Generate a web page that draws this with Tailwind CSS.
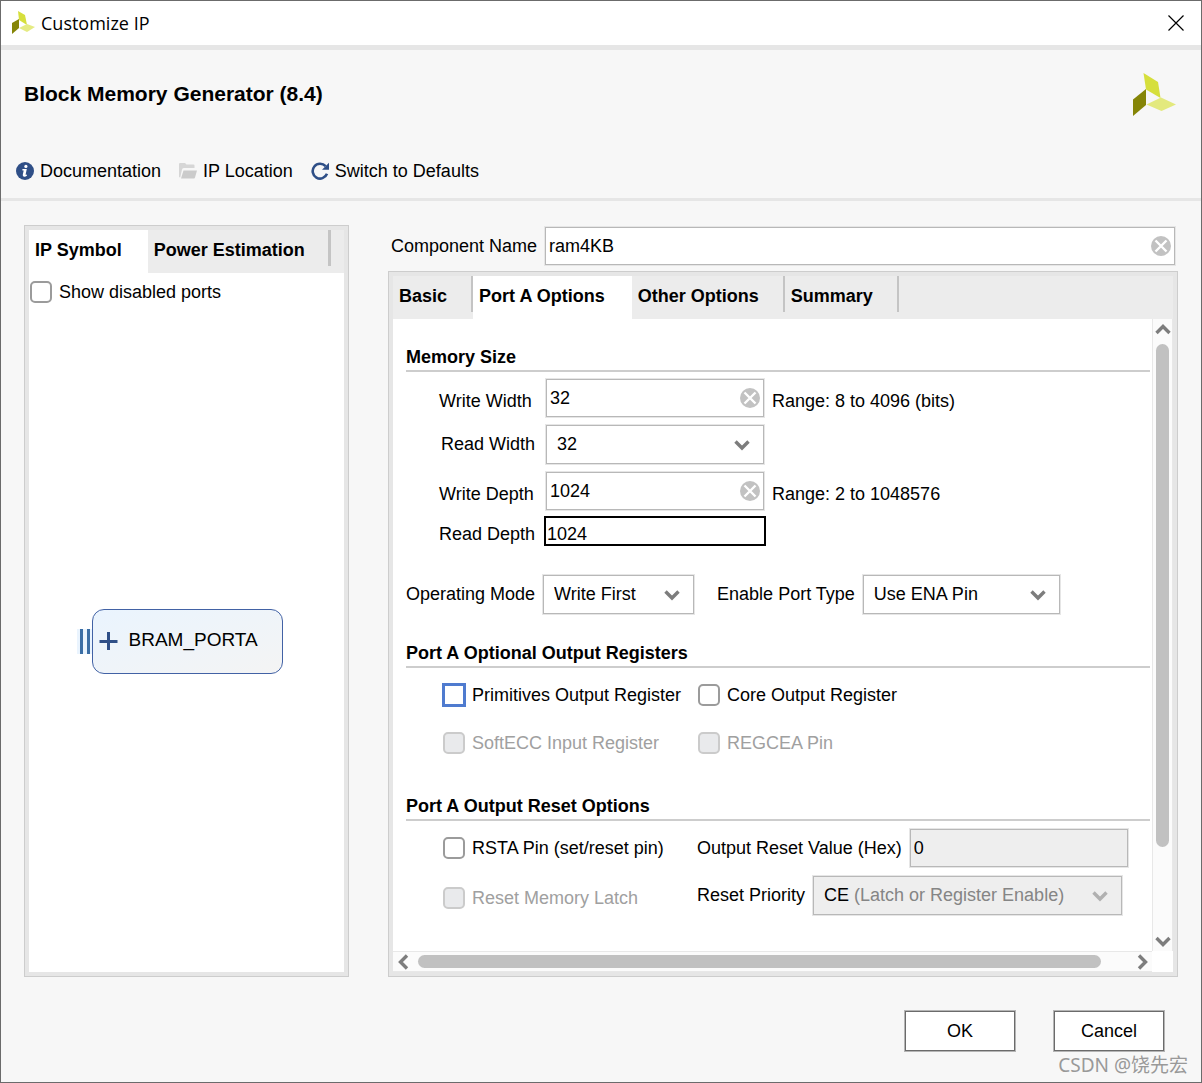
<!DOCTYPE html>
<html lang="en">
<head>
  <meta charset="UTF-8">
  <meta name="viewport" content="width=device-width, initial-scale=1.0">
  <title>Customize IP</title>
  <script src="https://cdn.jsdelivr.net/npm/@tailwindcss/browser@4"></script>
</head>
<body class="min-h-screen flex flex-col border border-[#6b6b6b] bg-[#f7f7f7] text-black text-[18px] leading-6 font-['Liberation_Sans',Arial,sans-serif]">

  <!-- Title bar -->
  <div class="h-[49px] shrink-0 flex items-center justify-between bg-white border-b-5 border-[#e6e6e6] pl-2.5 pr-[17px] pb-px">
    <div class="flex items-center gap-1.5">
      <svg class="w-6 h-6" viewBox="0 0 24 24">
        <path fill="#d6df3c" d="M7 0 L14 4 L16 14 L8 9 Z" />
        <path fill="#858507" d="M1 12 L8 8 V17 L1 23 Z" />
        <path fill="#e5eb83" d="M8 17 L16 13 L24 16 L16 21 Z" />
      </svg>
      <h1 class="text-[18px] font-['Open_Sans','Noto_Sans',sans-serif]">Customize IP</h1>
    </div>
    <button type="button" aria-label="Close">
      <svg class="w-4 h-4" viewBox="0 0 16 16" fill="none" stroke="#000" stroke-width="1.2">
        <path d="M0.5 0.5 L15.5 15.5 M15.5 0.5 L0.5 15.5" />
      </svg>
    </button>
  </div>

  <!-- Header -->
  <header class="shrink-0 border-b-3 border-[#e6e6e6] pb-[15px]">
    <div class="flex items-start justify-between pl-[23px] pr-[25px] pt-[23px]">
      <h2 class="text-[21px] font-bold pt-[9px]">Block Memory Generator (8.4)</h2>
      <svg class="w-[43px] h-[43px]" viewBox="0 0 43 43">
        <path fill="#d6df3c" d="M10.5 0 L25 9 L27.5 25 L13 16.5 Z" />
        <path fill="#858507" d="M0 26.5 L13 16 V32 L0 43 Z" />
        <path fill="#e3e97d" d="M13.5 31.5 L28 24.5 L43 31.5 L28.5 38 Z" />
      </svg>
    </div>
    <nav class="flex gap-[18px] pl-[15px] pt-[43px]">
      <a href="#" class="flex items-center gap-1.5">
        <svg class="w-[18px] h-[18px]" viewBox="0 0 18 18">
          <circle cx="9" cy="9" r="9" fill="#2f4f87" />
          <circle cx="9.9" cy="4.4" r="1.6" fill="#fff" />
          <path d="M6.4 7 H10.8 L9.6 12.4 Q9.5 13.1 10.9 12.6 V13.7 Q9.4 14.9 8 14.7 Q6.4 14.4 6.8 12.6 L7.7 8.4 H6.4 Z" fill="#fff" />
        </svg>
        Documentation
      </a>
      <a href="#" class="flex items-center gap-1.5">
        <svg class="w-[18px] h-[18px]" viewBox="0 0 18 18" fill="#cbcbcb">
          <path d="M0 2 Q0 1 1 1 H6 L7.5 2.5 H14.5 Q15.5 2.5 15.5 3.5 V6 H5 Q3.6 6 3 7.4 L1.2 15.5 Q0 15.5 0 14.5 Z" opacity="0.75" />
          <path d="M4.5 8.5 H18 L16 15.5 Q15.8 16.5 15 16.5 H2 Z" />
        </svg>
        IP Location
      </a>
      <a href="#" class="flex items-center gap-1.5">
        <svg class="w-[18px] h-[18px]" viewBox="0 0 18 18">
          <path d="M14.6 4.2 A7.4 7.4 0 1 0 16 11.8" fill="none" stroke="#2f4f87" stroke-width="2.6" />
          <path d="M18 0.8 V7.8 H11 Z" fill="#2f4f87" />
        </svg>
        Switch to Defaults
      </a>
    </nav>
  </header>

  <main class="flex-1 min-h-0 flex gap-[39px] px-[23px] pt-6">

    <!-- Left panel: symbol preview -->
    <section class="w-[325px] shrink-0 flex flex-col border border-[#cdcdcd] bg-[#e6e6e6] p-1">
      <div class="h-[43px] flex bg-[#ececec] font-bold" role="tablist">
        <button type="button" role="tab" aria-selected="true" class="bg-white pl-1.5 pr-[26px] pb-1 whitespace-nowrap">IP Symbol</button>
        <button type="button" role="tab" class="relative pl-1.5 pr-[26px] pb-1 whitespace-nowrap after:absolute after:right-0 after:top-0 after:h-9 after:w-[3px] after:bg-[#c4c4c4]">Power Estimation</button>
      </div>
      <div class="flex-1 flex flex-col bg-white">
        <label class="flex items-center gap-[7px] pl-px pt-[7px]">
          <input type="checkbox" class="appearance-none w-[22px] h-[22px] rounded-[5px] border-2 border-[#9b9b9b] bg-white">
          Show disabled ports
        </label>
        <div class="flex-1 flex items-center justify-center pr-3.5 pt-1.5">
          <!-- bus pins -->
          <div class="flex gap-1 bg-[#eaf4fe] pl-[3px] pr-0.5">
            <span class="w-[3px] h-[25px] bg-[#3b6ea5]"></span>
            <span class="w-[3px] h-[25px] bg-[#3b6ea5]"></span>
          </div>
          <button type="button" class="w-[191px] h-[65px] flex items-center gap-[11px] rounded-xl border border-[#4262a5] bg-linear-to-br from-[#eaf4fe] to-[#f4f4f4] pl-1.5 pb-0.5 text-[19px]">
            <svg class="w-[19px] h-[19px]" viewBox="0 0 19 19" fill="none" stroke="#2f4f87" stroke-width="3">
              <path d="M9.5 1 V19 M0.5 10.5 H18.5" />
            </svg>
            BRAM_PORTA
          </button>
        </div>
      </div>
    </section>

    <!-- Right panel: options -->
    <section class="flex-1 min-w-0 flex flex-col">
      <div class="flex items-center gap-2 pl-[3px] pr-[3px] pt-0.5 pb-1.5">
        <label for="component-name">Component Name</label>
        <div class="relative flex-1">
          <input id="component-name" type="text" value="ram4KB" class="block w-full h-[38px] border border-[#b8b8b8] ring-1 ring-[#e6e6e6] bg-white pl-[3px] pr-8">
          <button type="button" aria-label="Clear" class="absolute right-1 top-[9px]">
            <svg class="w-5 h-5" viewBox="0 0 20 20">
              <circle cx="10" cy="10" r="10" fill="#c2c2c2" />
              <path d="M4.5 4.5 L15.5 15.5 M15.5 4.5 L4.5 15.5" stroke="#fff" stroke-width="2.4" />
            </svg>
          </button>
        </div>
      </div>

      <div class="flex-1 min-h-0 flex flex-col border border-[#cdcdcd] bg-[#e6e6e6] p-1">
        <div class="h-[43px] shrink-0 flex bg-[#ececec] font-bold" role="tablist">
          <button type="button" role="tab" class="relative pl-1.5 pr-[26px] pb-1 whitespace-nowrap after:absolute after:right-0 after:top-0 after:h-9 after:w-0.5 after:bg-[#c4c4c4]">Basic</button>
          <button type="button" role="tab" aria-selected="true" class="bg-white pl-1.5 pr-[27px] pb-1 whitespace-nowrap">Port A Options</button>
          <button type="button" role="tab" class="relative pl-1.5 pr-[26px] pb-1 whitespace-nowrap after:absolute after:right-0 after:top-0 after:h-9 after:w-0.5 after:bg-[#c4c4c4]">Other Options</button>
          <button type="button" role="tab" class="relative pl-1.5 pr-[26px] pb-1 whitespace-nowrap after:absolute after:right-0 after:top-0 after:h-9 after:w-0.5 after:bg-[#c4c4c4]">Summary</button>
        </div>

        <div class="flex-1 min-h-0 flex">
          <form class="flex-1 min-w-0 bg-white pl-[13px] pr-0.5 pt-[26px]">

            <!-- Memory Size -->
            <h3 class="font-bold pb-px border-b-2 border-[#cdcdcd]">Memory Size</h3>
            <div class="grid grid-cols-[105px_222px_1fr] gap-y-2 items-center pl-[33px] pt-[7px]">
              <label for="write-width" class="pt-1.5">Write Width</label>
              <div class="relative mx-0.5">
                <input id="write-width" type="text" value="32" class="block w-full h-[38px] border border-[#b8b8b8] ring-1 ring-[#e6e6e6] bg-white pl-[3px] pr-8">
                <button type="button" aria-label="Clear" class="absolute right-1 top-[9px]">
                  <svg class="w-5 h-5" viewBox="0 0 20 20">
                    <circle cx="10" cy="10" r="10" fill="#c2c2c2" />
                    <path d="M4.5 4.5 L15.5 15.5 M15.5 4.5 L4.5 15.5" stroke="#fff" stroke-width="2.4" />
                  </svg>
                </button>
              </div>
              <span class="pl-1.5 pt-1.5">Range: 8 to 4096 (bits)</span>

              <label for="read-width" class="pl-0.5 pb-0.5">Read Width</label>
              <div class="relative mx-0.5">
                <select id="read-width" class="block appearance-none w-full h-[39px] border border-[#b8b8b8] ring-1 ring-[#e6e6e6] bg-white pl-2.5 pb-0.5">
                  <option>32</option>
                </select>
                <svg class="absolute right-[14px] top-[15px] w-4 h-[11px] pointer-events-none" viewBox="0 0 16 11" fill="none" stroke="#7d7d7d" stroke-width="3.4">
                  <path d="M1.5 1.5 L8 8 L14.5 1.5" />
                </svg>
              </div>
              <span></span>

              <label for="write-depth" class="pt-1.5">Write Depth</label>
              <div class="relative mx-0.5">
                <input id="write-depth" type="text" value="1024" class="block w-full h-[38px] border border-[#b8b8b8] ring-1 ring-[#e6e6e6] bg-white pl-[3px] pr-8">
                <button type="button" aria-label="Clear" class="absolute right-1 top-[9px]">
                  <svg class="w-5 h-5" viewBox="0 0 20 20">
                    <circle cx="10" cy="10" r="10" fill="#c2c2c2" />
                    <path d="M4.5 4.5 L15.5 15.5 M15.5 4.5 L4.5 15.5" stroke="#fff" stroke-width="2.4" />
                  </svg>
                </button>
              </div>
              <span class="pl-1.5 pt-1.5">Range: 2 to 1048576</span>
            </div>
            <div class="grid grid-cols-[105px_222px] items-center pl-[33px] pt-1.5">
              <label for="read-depth" class="pt-1.5">Read Depth</label>
              <input id="read-depth" type="text" value="1024" readonly class="block w-full h-[30px] border-2 border-black bg-white pt-1.5 pl-px">
            </div>

            <div class="flex items-center pt-[29px]">
              <label for="operating-mode" class="pb-0.5">Operating Mode</label>
              <div class="relative ml-2 w-[151px]">
                <select id="operating-mode" class="block appearance-none w-full h-[39px] border border-[#b8b8b8] ring-1 ring-[#e6e6e6] bg-white pl-2.5 pb-0.5">
                  <option>Write First</option>
                </select>
                <svg class="absolute right-[14px] top-[15px] w-4 h-[11px] pointer-events-none" viewBox="0 0 16 11" fill="none" stroke="#7d7d7d" stroke-width="3.4">
                  <path d="M1.5 1.5 L8 8 L14.5 1.5" />
                </svg>
              </div>
              <label for="enable-port" class="ml-[23px] pb-0.5">Enable Port Type</label>
              <div class="relative ml-2 w-[197px]">
                <select id="enable-port" class="block appearance-none w-full h-[39px] border border-[#b8b8b8] ring-1 ring-[#e6e6e6] bg-white pl-2.5 pb-0.5">
                  <option>Use ENA Pin</option>
                </select>
                <svg class="absolute right-[14px] top-[15px] w-4 h-[11px] pointer-events-none" viewBox="0 0 16 11" fill="none" stroke="#7d7d7d" stroke-width="3.4">
                  <path d="M1.5 1.5 L8 8 L14.5 1.5" />
                </svg>
              </div>
            </div>

            <!-- Optional Output Registers -->
            <h3 class="font-bold mt-[27px] pb-px border-b-2 border-[#cdcdcd]">Port A Optional Output Registers</h3>
            <div class="grid grid-cols-[255px_1fr] auto-rows-[48px] items-center pl-[37px] pt-[3px]">
              <label class="flex items-center gap-[7px]">
                <input type="checkbox" class="appearance-none w-[22px] h-[22px] border-2 border-[#4f7bcf] outline-1 outline-[#4f7bcf] bg-white">
                Primitives Output Register
              </label>
              <label class="flex items-center gap-[7px]">
                <input type="checkbox" class="appearance-none w-[22px] h-[22px] rounded-[5px] border-2 border-[#9b9b9b] bg-white">
                Core Output Register
              </label>
              <label class="flex items-center gap-[7px] text-[#a0a0a0]">
                <input type="checkbox" disabled class="appearance-none w-[22px] h-[22px] rounded-[5px] border-2 border-[#cbcbcb] bg-[#e9eaec]">
                SoftECC Input Register
              </label>
              <label class="flex items-center gap-[7px] text-[#a0a0a0]">
                <input type="checkbox" disabled class="appearance-none w-[22px] h-[22px] rounded-[5px] border-2 border-[#cbcbcb] bg-[#e9eaec]">
                REGCEA Pin
              </label>
            </div>

            <!-- Output Reset Options -->
            <h3 class="font-bold mt-[27px] pb-px border-b-2 border-[#cdcdcd]">Port A Output Reset Options</h3>
            <div class="grid grid-cols-[254px_1fr] gap-y-[9px] items-center pl-[37px] pt-2">
              <label class="flex items-center gap-[7px]">
                <input type="checkbox" class="appearance-none w-[22px] h-[22px] rounded-[5px] border-2 border-[#9b9b9b] bg-white">
                RSTA Pin (set/reset pin)
              </label>
              <div class="flex items-center gap-2">
                <label for="reset-value">Output Reset Value (Hex)</label>
                <input id="reset-value" type="text" value="0" disabled class="w-[218px] h-[38px] border border-[#b8b8b8] ring-1 ring-[#e6e6e6] bg-[#eeeeee] pl-[3px]">
              </div>
              <label class="flex items-center gap-[7px] pt-1 text-[#a0a0a0]">
                <input type="checkbox" disabled class="appearance-none w-[22px] h-[22px] rounded-[5px] border-2 border-[#cbcbcb] bg-[#e9eaec]">
                Reset Memory Latch
              </label>
              <div class="flex items-center gap-2">
                <label for="reset-priority" class="pb-0.5">Reset Priority</label>
                <div class="relative w-[309px]">
                  <select id="reset-priority" disabled class="block appearance-none w-full h-[39px] border border-[#b8b8b8] ring-1 ring-[#e6e6e6] bg-[#eeeeee] pl-2.5 pb-0.5 text-black opacity-100">
                    <option>CE</option>
                  </select>
                  <span class="absolute left-[41px] top-[7px] text-[#858585] pointer-events-none">(Latch or Register Enable)</span>
                  <svg class="absolute right-[14px] top-[15px] w-4 h-[11px] pointer-events-none" viewBox="0 0 16 11" fill="none" stroke="#b0b0b0" stroke-width="3.4">
                    <path d="M1.5 1.5 L8 8 L14.5 1.5" />
                  </svg>
                </div>
              </div>
            </div>
          </form>

          <!-- Vertical scrollbar -->
          <div class="w-[21px] shrink-0 flex flex-col items-center justify-between bg-[#fbfbfb] border-x border-[#e8e8e8] pt-[5px] pb-1">
            <svg class="w-4 h-[11px]" viewBox="0 0 16 11" fill="none" stroke="#7d7d7d" stroke-width="3.4">
              <path d="M1.5 9 L8 2.5 L14.5 9" />
            </svg>
            <div class="flex-1 w-full flex flex-col items-center pt-[9px]">
              <div class="w-[13px] h-[85%] rounded-full bg-[#c1c1c1]"></div>
            </div>
            <svg class="w-4 h-[11px]" viewBox="0 0 16 11" fill="none" stroke="#7d7d7d" stroke-width="3.4">
              <path d="M1.5 2 L8 8.5 L14.5 2" />
            </svg>
          </div>
        </div>

        <!-- Horizontal scrollbar -->
        <div class="h-[21px] shrink-0 flex bg-white">
          <div class="flex-1 flex items-center bg-[#fbfbfb] border-y border-[#e8e8e8] pl-[5px] pr-1">
            <svg class="w-[11px] h-4" viewBox="0 0 11 16" fill="none" stroke="#7d7d7d" stroke-width="3.4">
              <path d="M9 1.5 L2.5 8 L9 14.5" />
            </svg>
            <div class="flex-1 pl-[9px]">
              <div class="w-[95%] h-[13px] rounded-full bg-[#c1c1c1]"></div>
            </div>
            <svg class="w-[11px] h-4" viewBox="0 0 11 16" fill="none" stroke="#7d7d7d" stroke-width="3.4">
              <path d="M2 1.5 L8.5 8 L2 14.5" />
            </svg>
          </div>
          <div class="w-[21px]"></div>
        </div>
      </div>
    </section>
  </main>

  <!-- Footer -->
  <footer class="relative shrink-0 flex justify-end gap-[39px] pt-[34px] pb-[31px] pr-[37px]">
    <button type="button" class="w-[110px] h-10 bg-white border border-[#6b6b6b] ring-1 ring-[#b5b5b5]">OK</button>
    <button type="button" class="w-[110px] h-10 bg-white border border-[#6b6b6b] ring-1 ring-[#b5b5b5]">Cancel</button>
    <span class="absolute right-[13px] bottom-[5px] text-[19px] leading-6 text-[#999999] font-['Noto_Sans','Noto_Sans_CJK_SC',sans-serif]">CSDN @饶先宏</span>
  </footer>

</body>
</html>
